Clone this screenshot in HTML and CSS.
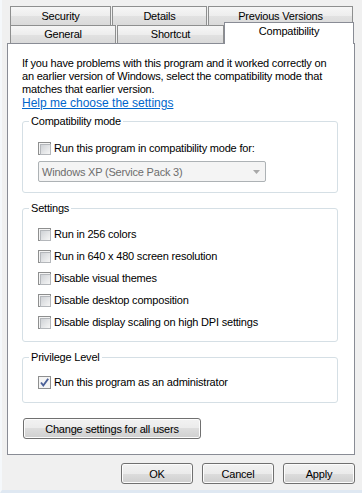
FILE: index.html
```html
<!DOCTYPE html>
<html>
<head>
  <title>Properties - Compatibility</title>
  <link rel="stylesheet" href="styles.css">
</head>
<body>
  <div class="window">
    <div class="tabs">
      <div class="tab-row back">
        <div class="tab t-security">Security</div>
        <div class="tab t-details">Details</div>
        <div class="tab t-versions">Previous Versions</div>
      </div>
      <div class="tab-row front">
        <div class="tab t-general">General</div>
        <div class="tab t-shortcut">Shortcut</div>
        <div class="tab t-compat selected">Compatibility</div>
      </div>
    </div>

    <div class="panel">
      <p class="intro">If you have problems with this program and it worked correctly on an earlier version of Windows, select the compatibility mode that matches that earlier version.</p>
      <a class="help" href="#">Help me choose the settings</a>

      <div class="group g-mode">
        <div class="group-title">Compatibility mode</div>
        <label class="row first"><span class="check"></span>Run this program in compatibility mode for:</label>
        <div class="select">
          <span>Windows XP (Service Pack 3)</span>
          <svg class="arrow" width="7" height="4" viewBox="0 0 7 4"><path d="M0 0h7L3.5 4z" fill="#a8a8a8"/></svg>
        </div>
      </div>

      <div class="group g-settings">
        <div class="group-title">Settings</div>
        <label class="row first"><span class="check"></span>Run in 256 colors</label>
        <label class="row"><span class="check"></span>Run in 640 x 480 screen resolution</label>
        <label class="row"><span class="check"></span>Disable visual themes</label>
        <label class="row"><span class="check"></span>Disable desktop composition</label>
        <label class="row"><span class="check"></span>Disable display scaling on high DPI settings</label>
      </div>

      <div class="group g-privilege">
        <div class="group-title">Privilege Level</div>
        <label class="row first">
          <span class="check checked">
            <svg width="11" height="11" viewBox="0 0 11 11"><path d="M2 5.5l2.3 3L9.2 1.8" fill="none" stroke="#4a5f97" stroke-width="1.9"/></svg>
          </span>Run this program as an administrator</label>
      </div>

      <button class="btn btn-wide">Change settings for all users</button>
    </div>

    <div class="actions">
      <button class="btn">OK</button>
      <button class="btn">Cancel</button>
      <button class="btn">Apply</button>
    </div>
  </div>
</body>
</html>
```

FILE: styles.css
```css
* {
  box-sizing: border-box;
}

body {
  margin: 0;
  background-color: #f0f0f0;
  font-family: "Liberation Sans", Arial, sans-serif;
  font-size: 11px;
  letter-spacing: -0.2px;
  color: #000;
}

.window {
  width: 362px;
  height: 493px;
  padding: 6px 0 0 5px;
  border-left: 2px solid #f5f8fb;
  border-bottom: 3px solid #dfe8f2;
}

/* tabs */
.tabs {
  padding-left: 3px;
}

.tab-row {
  display: flex;
}

.tab {
  border: 1px solid #8e8f8f;
  border-bottom: none;
  margin-right: 1px;
  text-align: center;
  line-height: 17px;
  background: linear-gradient(#f6f6f6, #ededed 50%, #e2e2e2 50%, #dadada);
}

.back .tab {
  height: 19px;
  padding-top: 1px;
}

.front .tab {
  height: 18px;
}

.t-security { width: 101px; }
.t-details { width: 95px; }
.t-versions { width: 145px; }
.t-general { width: 106px; }
.t-shortcut { width: 107px; margin-right: 0; }

.tab.selected {
  width: 130px;
  height: 22px;
  margin: -3px 0 -1px 0;
  background: #fff;
  border-color: #898c95;
  position: relative;
  z-index: 1;
}

/* panel */
.panel {
  width: 348px;
  background-color: #fff;
  border: 1px solid #898c95;
  padding: 13px 16px 15px 14px;
}

.intro {
  margin: 0;
  line-height: 13px;
}

.help {
  display: block;
  width: fit-content;
  font-size: 12px;
  line-height: 14px;
  letter-spacing: 0;
  color: #0066cc;
}

.group {
  border: 1px solid #d5dfe5;
  border-radius: 3px;
  padding: 0 10px 10px 15px;
  margin-top: 15px;
}

.g-mode {
  margin-top: 11px;
}

.g-settings {
  padding-bottom: 12px;
}

.g-privilege {
  padding-bottom: 13px;
}

.group-title {
  width: fit-content;
  background-color: #fff;
  padding: 0 2px;
  margin: -7px 0 0 -9px;
  line-height: 13px;
}

.row {
  display: flex;
  align-items: center;
  height: 13px;
  line-height: 13px;
  margin-top: 9px;
}

.row.first {
  margin-top: 13px;
}

.g-mode .row.first {
  margin-top: 14px;
}

.g-privilege .row.first {
  margin-top: 12px;
}

.check {
  width: 13px;
  height: 13px;
  flex: none;
  margin-right: 3px;
  border: 1px solid #8e8f8f;
  padding: 1px;
  background-color: #f4f4f4;
}

.check::before {
  content: "";
  display: block;
  width: 100%;
  height: 100%;
  border: 1px solid #b4b7bb;
  background: linear-gradient(135deg, #cfd2d6, #f6f6f6);
}

.check.checked {
  padding: 0;
}

.check.checked::before {
  display: none;
}

.check svg {
  display: block;
}

.select {
  display: flex;
  align-items: center;
  width: 228px;
  height: 21px;
  margin-top: 6px;
  padding: 0 5px 0 3px;
  border: 1px solid #adb2b5;
  border-radius: 2px;
  background-color: #f4f4f4;
  color: #6d6d6d;
}

.select .arrow {
  margin-left: auto;
}

/* buttons */
.btn {
  height: 21px;
  width: 72px;
  padding: 0;
  border: 1px solid #707070;
  border-radius: 3px;
  background: linear-gradient(#f2f2f2, #ebebeb 50%, #dddddd 50%, #cfcfcf);
  box-shadow: inset 0 0 0 1px #fcfcfc;
  font-family: inherit;
  font-size: 11px;
  letter-spacing: inherit;
  color: #000;
}

.btn-wide {
  display: block;
  width: 178px;
  margin: 15px 0 0 1px;
}

.actions {
  width: 348px;
  display: flex;
  justify-content: flex-end;
  gap: 9px;
  margin-top: 8px;
}
```
